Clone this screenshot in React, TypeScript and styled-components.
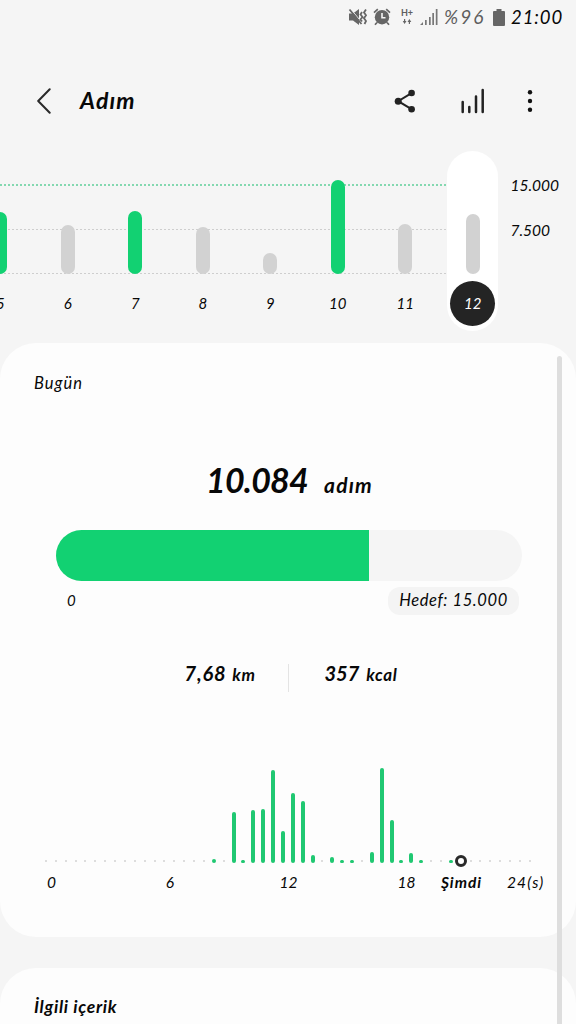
import styled, { createGlobalStyle } from "styled-components";

import type { FC } from "react";

type Day = {
  label: string;
  height: number;
  reached?: boolean;
  selected?: boolean;
};

const days: Day[] = [
  { label: "5", height: 62, reached: true },
  { label: "6", height: 49 },
  { label: "7", height: 63, reached: true },
  { label: "8", height: 47 },
  { label: "9", height: 21 },
  { label: "10", height: 94, reached: true },
  { label: "11", height: 50 },
  { label: "12", height: 60, selected: true },
];

const SLOT_COUNT = 50;
const NOW_SLOT = 42;

// slot index -> bar height
const activity: Record<number, number> = {
  17: 4,
  19: 51,
  20: 3,
  21: 53,
  22: 54,
  23: 93,
  24: 32,
  25: 70,
  26: 62,
  27: 8,
  29: 6,
  30: 3,
  31: 3,
  33: 11,
  34: 95,
  35: 43,
  36: 3,
  37: 10,
  38: 3,
  41: 3,
};

const steps = 10084;
const goal = 15000;

const MuteIcon: FC = () => (
  <svg width="20" height="18" viewBox="0 0 20 18" fill="none" stroke="#666">
    <path d="M1 5.5h4l6-4.5v16l-6-4.5H1z" fill="#666" stroke="none" />
    <path d="M2.6 1L14 14.5" stroke="#f5f5f5" strokeWidth="1" />
    <path d="M1.5 1.5l12 14.5" strokeWidth="1.8" />
    <path d="M14 4l-1.5 2.5L14.5 9l-2 2.5 1.5 2M18 1.5l-2 2.9 2 2.9-2 2.9 2 2.9-1.5 2.9" strokeWidth="1.8" />
  </svg>
);

const AlarmIcon: FC = () => (
  <svg width="18" height="18" viewBox="0 0 18 18" fill="none" stroke="#666">
    <circle cx="9" cy="9.2" r="7.2" fill="#666" stroke="none" />
    <path d="M1 4.6L4.8 1.2M17 4.6l-3.8-3.4M4 14.5l-2 2.3M14 14.5l2 2.3" strokeWidth="1.7" />
    <path d="M9 5v4.7h3.5" stroke="#f5f5f5" strokeWidth="1.6" />
  </svg>
);

const SignalIcon: FC = () => (
  <svg width="18" height="18" viewBox="0 0 18 18" fill="#777">
    <path d="M0 17l3-3v3zM5 12h1.7v5H5zM9 9h1.7v8H9zM12.3 5H14v12h-1.7z" />
    <path d="M15.8 1h1.7v16h-1.7z" />
  </svg>
);

const DataArrows: FC = () => (
  <svg width="10" height="6" viewBox="0 0 10 6" fill="#666">
    <path d="M2 0h1.2v2h1.3L2.6 5 .7 2H2zM6.8 5H8V3h1.3L7.4 0 5.5 3h1.3z" />
  </svg>
);

const BatteryIcon: FC = () => (
  <svg width="12" height="17" viewBox="0 0 12 17" fill="#666">
    <path d="M3.5 0h5v2H11q1 0 1 1v13q0 1-1 1H1q-1 0-1-1V3q0-1 1-1h2.5z" />
  </svg>
);

const BackIcon: FC = () => (
  <svg width="14" height="26" viewBox="0 0 14 26" fill="none" stroke="#2a2a2a" strokeWidth="2" strokeLinecap="round" strokeLinejoin="round">
    <path d="M12.7 1.2L1.2 13l11.5 11.8" />
  </svg>
);

const ShareIcon: FC = () => (
  <svg width="22" height="24" viewBox="0 0 22 24" fill="#222" stroke="#222">
    <path d="M17.5 4.2L4.2 12.2l13.3 8" fill="none" strokeWidth="2" />
    <circle cx="4.2" cy="12.2" r="3.5" stroke="none" />
    <circle cx="17.6" cy="4" r="3.3" stroke="none" />
    <circle cx="17.6" cy="20.3" r="3.3" stroke="none" />
  </svg>
);

const StatsIcon: FC = () => (
  <svg width="24" height="26" viewBox="0 0 24 26" stroke="#222" strokeWidth="2.5" strokeLinecap="round">
    <path d="M1.7 14v10M8.3 19v5M15 8.5V24M21.7 2v22" />
  </svg>
);

const MoreIcon: FC = () => (
  <svg width="6" height="24" viewBox="0 0 6 24" fill="#111">
    <circle cx="3" cy="3.2" r="2.2" />
    <circle cx="3" cy="12" r="2.2" />
    <circle cx="3" cy="20.8" r="2.2" />
  </svg>
);

const StatusBar: FC = () => (
  <Status>
    <MuteIcon />
    <AlarmIcon />
    <Network>
      H+
      <DataArrows />
    </Network>
    <SignalIcon />
    <Percent>%96</Percent>
    <BatteryIcon />
    <Clock>21:00</Clock>
  </Status>
);

const WeeklyChart: FC = () => (
  <Weekly>
    <GridLine $top={33} $goal />
    <GridLine $top={78} />
    <GridLine $top={122} />
    <Days>
      {days.map(({ label, height, reached, selected }) => (
        <DayCell key={label}>
          <DayColumn $selected={selected}>
            <DayBar $reached={reached} style={{ height }} />
            <DayLabel $selected={selected}>{label}</DayLabel>
          </DayColumn>
        </DayCell>
      ))}
    </Days>
    <Scale>
      <ScaleLabel>15.000</ScaleLabel>
      <ScaleLabel>7.500</ScaleLabel>
    </Scale>
  </Weekly>
);

const HourlyChart: FC = () => (
  <>
    <Slots>
      {Array.from({ length: SLOT_COUNT }, (_, i) => (
        <Slot key={i}>
          {i === NOW_SLOT ? (
            <NowMarker />
          ) : activity[i] ? (
            <HourBar style={{ height: activity[i] }} />
          ) : (
            <Dot />
          )}
        </Slot>
      ))}
    </Slots>
    <Hours>
      <span>0</span>
      <span>6</span>
      <span>12</span>
      <i />
      <span>18</span>
      <Now>Şimdi</Now>
      <LastHour>24(s)</LastHour>
    </Hours>
  </>
);

const App: FC = () => (
  <>
    <GlobalStyle />
    <Screen>
      <StatusBar />
      <Header>
        <BackIcon />
        <Title>Adım</Title>
        <Actions>
          <ShareIcon />
          <StatsIcon />
          <MoreIcon />
        </Actions>
      </Header>
      <WeeklyChart />
      <TodayCard>
        <Today>Bugün</Today>
        <Total>
          <TotalValue>10.084</TotalValue>
          <TotalUnit>adım</TotalUnit>
        </Total>
        <Progress>
          <ProgressFill style={{ width: `${(steps / goal) * 100}%` }} />
        </Progress>
        <ProgressLabels>
          <Zero>0</Zero>
          <Goal>Hedef: 15.000</Goal>
        </ProgressLabels>
        <Summary>
          <Distance>
            <Value>7,68</Value>
            <Unit>km</Unit>
          </Distance>
          <Divider />
          <Calories>
            <Value>357</Value>
            <Unit>kcal</Unit>
          </Calories>
        </Summary>
        <HourlyChart />
      </TodayCard>
      <RelatedCard>
        <RelatedTitle>İlgili içerik</RelatedTitle>
      </RelatedCard>
      <Scrollbar />
    </Screen>
  </>
);

export default App;

const GlobalStyle = createGlobalStyle`
  * {
    box-sizing: border-box;
  }

  body {
    margin: 0;
    overflow: hidden;
    background-color: #f5f5f5;
  }

  svg {
    display: block;
    flex-shrink: 0;
  }
`;

const Screen = styled.div`
  position: relative;
  width: 576px;
  height: 1024px;
  overflow: hidden;
  background-color: #f5f5f5;
  color: #080808;
  font-family: Lato, "Open Sans", sans-serif;
  font-size: 16px;
  font-style: italic;
  line-height: 20px;
  white-space: nowrap;
`;

const Status = styled.div`
  display: flex;
  align-items: center;
  height: 34px;
  padding-left: 348px;
  color: #5e5e5e;

  > svg:nth-child(2) {
    margin-left: 5px;
  }
`;

const Network = styled.div`
  display: flex;
  flex-direction: column;
  align-items: center;
  gap: 2px;
  width: 14px;
  margin: 0 6px 0 9px;
  font-size: 9px;
  font-style: normal;
  font-weight: bold;
  line-height: 8px;
`;

const Percent = styled.div`
  width: 42px;
  margin: 0 7px 0 6px;
  font-size: 19px;
  letter-spacing: 2px;
`;

const Clock = styled.div`
  margin-left: 6px;
  color: #080808;
  font-size: 18.5px;
  letter-spacing: 0.9px;
`;

const Header = styled.header`
  display: flex;
  align-items: center;
  height: 117px;
  padding: 17px 43px 0 37px;
`;

const Title = styled.h1`
  margin: -2px 0 0 29px;
  font-size: 23px;
  font-weight: bold;
  letter-spacing: 1.2px;
`;

const Actions = styled.div`
  display: flex;
  align-items: center;
  margin-left: auto;

  > svg:nth-child(2) {
    margin: 0 42px 0 45px;
  }
`;

const Weekly = styled.section`
  position: relative;
  display: flex;
  height: 180px;
`;

const GridLine = styled.div<{ $top: number; $goal?: boolean }>`
  position: absolute;
  top: ${({ $top }) => $top}px;
  left: 0;
  width: 447px;
  height: ${({ $goal }) => ($goal ? 2 : 1)}px;
  background: repeating-linear-gradient(
    to right,
    ${({ $goal }) => ($goal ? "#84d8b0" : "#cecece")} 0 2px,
    transparent 2px 4px
  );
`;

const Days = styled.div`
  display: flex;
  flex-shrink: 0;
  margin-left: -33.5px;
`;

const DayCell = styled.div`
  position: relative;
  display: flex;
  justify-content: center;
  width: 67.5px;
`;

const DayColumn = styled.div<{ $selected?: boolean }>`
  display: flex;
  flex-direction: column;
  align-items: center;
  justify-content: flex-end;
  width: 51px;
  height: 180px;
  padding-bottom: 5px;
  border-radius: 26px;
  background-color: ${({ $selected }) => ($selected ? "#ffffff" : "transparent")};
`;

const DayBar = styled.div<{ $reached?: boolean }>`
  width: 14px;
  border-radius: 7px;
  background-color: ${({ $reached }) => ($reached ? "#12d172" : "#d2d2d2")};
`;

const DayLabel = styled.div<{ $selected?: boolean }>`
  width: 45px;
  height: 45px;
  margin-top: 7px;
  border-radius: 50%;
  background-color: ${({ $selected }) => ($selected ? "#242424" : "transparent")};
  color: ${({ $selected }) => ($selected ? "#ffffff" : "#080808")};
  font-size: 15px;
  line-height: 45px;
  text-align: center;
`;

const Scale = styled.div`
  display: flex;
  flex-direction: column;
  gap: 25px;
  padding: 24px 0 0 4px;
`;

const ScaleLabel = styled.div`
  font-size: 15.5px;
`;

const Card = styled.section`
  background-color: #fdfdfd;
`;

const TodayCard = styled(Card)`
  height: 594px;
  margin-top: 12px;
  padding-top: 30px;
  border-radius: 36px;
`;

const Today = styled.h2`
  margin: 0 0 0 34px;
  font-size: 16.5px;
  font-weight: normal;
  letter-spacing: 1px;
`;

const Total = styled.div`
  display: flex;
  align-items: baseline;
  height: 40px;
  margin: 67px 0 0 206px;
  line-height: 40px;
`;

const TotalValue = styled.div`
  width: 118px;
  font-size: 34px;
  font-weight: bold;
  letter-spacing: -0.8px;
`;

const TotalUnit = styled.div`
  font-size: 21px;
  font-weight: bold;
  letter-spacing: 1.2px;
`;

const Progress = styled.div`
  width: 466px;
  height: 51px;
  margin: 30px 0 0 56px;
  overflow: hidden;
  border-radius: 26px;
  background-color: #f5f5f5;
`;

const ProgressFill = styled.div`
  height: 100%;
  background-color: #12d172;
`;

const ProgressLabels = styled.div`
  display: flex;
  align-items: center;
  justify-content: space-between;
  margin: 6px 57px 0 67px;
`;

const Zero = styled.div`
  margin-top: -2px;
  font-size: 15px;
`;

const Goal = styled.div`
  width: 131px;
  height: 28px;
  border-radius: 12px;
  background-color: #f4f4f4;
  font-size: 16.5px;
  letter-spacing: 0.6px;
  line-height: 27px;
  text-align: center;
`;

const Summary = styled.div`
  display: flex;
  align-items: center;
  height: 28px;
  margin-top: 49px;
`;

const Distance = styled.div`
  display: flex;
  align-items: baseline;
  justify-content: flex-end;
  gap: 6px;
  width: 287.5px;
  padding: 0 32px 8px 0;
  letter-spacing: 0.8px;
`;

const Calories = styled(Distance)`
  justify-content: flex-start;
  gap: 7px;
  padding: 0 0 8px 36px;
  letter-spacing: 0;
`;

const Value = styled.div`
  font-size: 20px;
  font-weight: bold;
`;

const Unit = styled.div`
  font-size: 17px;
  font-weight: bold;
  letter-spacing: 0.6px;
`;

const Divider = styled.div`
  width: 1px;
  height: 28px;
  background-color: #e4e4e4;
`;

const Slots = styled.div`
  display: flex;
  align-items: flex-end;
  height: 97px;
  margin: 75px 0 0 41px;
`;

const Slot = styled.div`
  display: flex;
  flex-shrink: 0;
  justify-content: center;
  width: 9.89px;
`;

const HourBar = styled.div`
  width: 4px;
  margin-bottom: 1px;
  border-radius: 2px;
  background-color: #20c872;
`;

const Dot = styled.div`
  width: 2px;
  height: 2px;
  margin-bottom: 2px;
  border-radius: 1px;
  background-color: #d2d2d2;
`;

const NowMarker = styled.div`
  flex-shrink: 0;
  width: 12px;
  height: 12px;
  margin-bottom: -3px;
  border: 3px solid #2a2a2a;
  border-radius: 50%;
  background-color: #ffffff;
`;

const Hours = styled.div`
  display: grid;
  grid-template-columns: 39px 198px 39px 70px 57px 53px auto;
  margin: 8px 0 0 32px;
  font-size: 15.5px;
  text-align: center;
`;

const Now = styled.div`
  font-weight: bold;
  letter-spacing: 1px;
`;

const LastHour = styled.div`
  padding-left: 19px;
  letter-spacing: 1.1px;
  text-align: left;
`;

const RelatedCard = styled(Card)`
  height: 120px;
  margin-top: 31px;
  padding: 29px 34px;
  border-radius: 36px 36px 0 0;
`;

const RelatedTitle = styled.h2`
  margin: 0;
  font-size: 17.5px;
  font-weight: bold;
  letter-spacing: 0.7px;
`;

const Scrollbar = styled.div`
  position: absolute;
  top: 356px;
  right: 14px;
  bottom: 0;
  width: 5px;
  border-radius: 3px 3px 0 0;
  background-color: #dedede;
`;
